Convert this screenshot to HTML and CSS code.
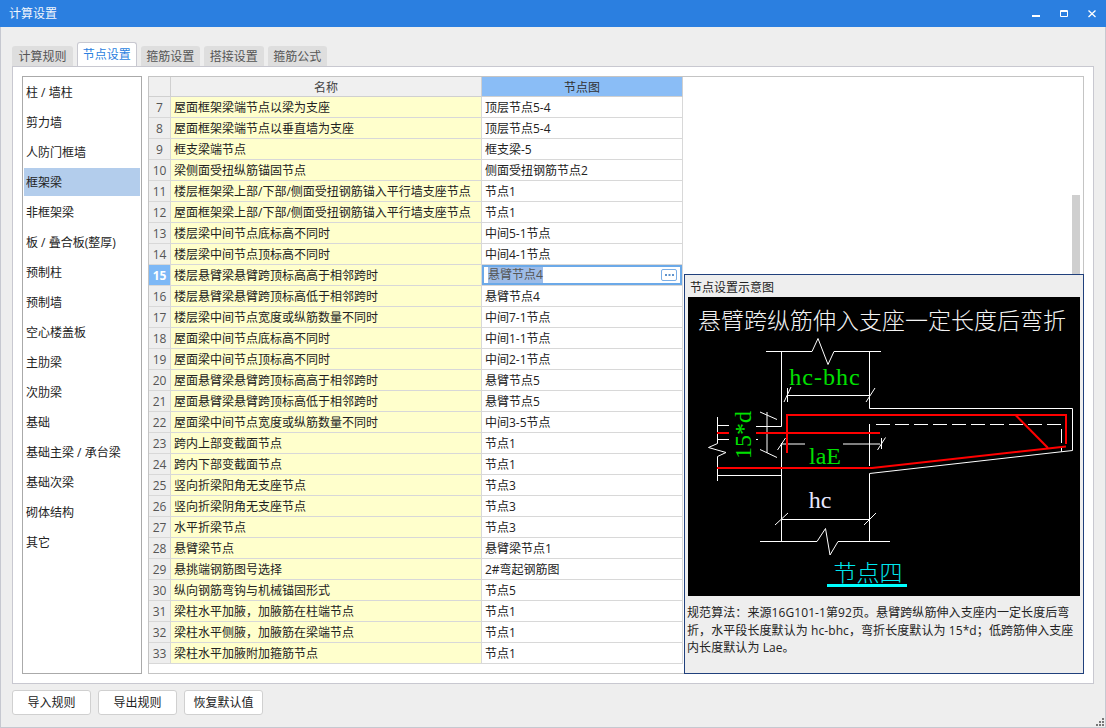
FILE: index.html
```html
<!DOCTYPE html>
<html lang="zh-CN">
<head>
<meta charset="utf-8">
<title>计算设置</title>
<link rel="stylesheet" href="styles.css">
</head>
<body>
<div class="window">
  <header class="titlebar">
    <span class="title">计算设置</span>
    <div class="controls">
      <svg class="ctl" viewBox="0 0 8 8"><rect x="0" y="5" width="8" height="2" fill="#fff"/></svg>
      <svg class="ctl" viewBox="0 0 8 8"><path d="M.5.5h7v6h-7zM.5 1.5h7" fill="none" stroke="#fff"/></svg>
      <svg class="ctl" viewBox="0 0 8 8"><path d="M.5.5l7 6.500M7.500.5l-7 6.500" fill="none" stroke="#fff" stroke-width="1.300"/></svg>
    </div>
  </header>
  <div class="content">
    <nav class="tabs">
      <span class="tab t61">计算规则</span>
      <span class="tab active">节点设置</span>
      <span class="tab">箍筋设置</span>
      <span class="tab">搭接设置</span>
      <span class="tab">箍筋公式</span>
    </nav>
    <main class="panel">
      <ul class="side">
        <li>柱 / 墙柱</li>
        <li>剪力墙</li>
        <li>人防门框墙</li>
        <li class="sel">框架梁</li>
        <li>非框架梁</li>
        <li>板 / 叠合板(整厚)</li>
        <li>预制柱</li>
        <li>预制墙</li>
        <li>空心楼盖板</li>
        <li>主肋梁</li>
        <li>次肋梁</li>
        <li>基础</li>
        <li>基础主梁 / 承台梁</li>
        <li>基础次梁</li>
        <li>砌体结构</li>
        <li>其它</li>
      </ul>
      <section class="grid">
        <table class="sheet">
          <colgroup><col class="c1"><col class="c2"><col class="c3"></colgroup>
          <thead>
            <tr><th></th><th>名称</th><th class="hsel">节点图</th></tr>
          </thead>
          <tbody>
            <tr><td class="n">7</td><td class="y">屋面框架梁端节点以梁为支座</td><td>顶层节点5-4</td></tr>
            <tr><td class="n">8</td><td class="y">屋面框架梁端节点以垂直墙为支座</td><td>顶层节点5-4</td></tr>
            <tr><td class="n">9</td><td class="y">框支梁端节点</td><td>框支梁-5</td></tr>
            <tr><td class="n">10</td><td class="y">梁侧面受扭纵筋锚固节点</td><td>侧面受扭钢筋节点2</td></tr>
            <tr><td class="n">11</td><td class="y">楼层框架梁上部/下部/侧面受扭钢筋锚入平行墙支座节点</td><td>节点1</td></tr>
            <tr><td class="n">12</td><td class="y">屋面框架梁上部/下部/侧面受扭钢筋锚入平行墙支座节点</td><td>节点1</td></tr>
            <tr><td class="n">13</td><td class="y">楼层梁中间节点底标高不同时</td><td>中间5-1节点</td></tr>
            <tr><td class="n">14</td><td class="y">楼层梁中间节点顶标高不同时</td><td>中间4-1节点</td></tr>
            <tr><td class="n cur">15</td><td class="y">楼层悬臂梁悬臂跨顶标高高于相邻跨时</td><td class="edit"><div class="editor"><span class="picked">悬臂节点4</span><span class="more"><svg class="dots" viewBox="0 0 9 2"><path d="M0 0h2v2H0zM3.500 0h2v2h-2zM7 0h2v2H7z" fill="#5f93cc"/></svg></span></div></td></tr>
            <tr><td class="n">16</td><td class="y">楼层悬臂梁悬臂跨顶标高低于相邻跨时</td><td>悬臂节点4</td></tr>
            <tr><td class="n">17</td><td class="y">楼层梁中间节点宽度或纵筋数量不同时</td><td>中间7-1节点</td></tr>
            <tr><td class="n">18</td><td class="y">屋面梁中间节点底标高不同时</td><td>中间1-1节点</td></tr>
            <tr><td class="n">19</td><td class="y">屋面梁中间节点顶标高不同时</td><td>中间2-1节点</td></tr>
            <tr><td class="n">20</td><td class="y">屋面悬臂梁悬臂跨顶标高高于相邻跨时</td><td>悬臂节点5</td></tr>
            <tr><td class="n">21</td><td class="y">屋面悬臂梁悬臂跨顶标高低于相邻跨时</td><td>悬臂节点5</td></tr>
            <tr><td class="n">22</td><td class="y">屋面梁中间节点宽度或纵筋数量不同时</td><td>中间3-5节点</td></tr>
            <tr><td class="n">23</td><td class="y">跨内上部变截面节点</td><td>节点1</td></tr>
            <tr><td class="n">24</td><td class="y">跨内下部变截面节点</td><td>节点1</td></tr>
            <tr><td class="n">25</td><td class="y">竖向折梁阳角无支座节点</td><td>节点3</td></tr>
            <tr><td class="n">26</td><td class="y">竖向折梁阴角无支座节点</td><td>节点3</td></tr>
            <tr><td class="n">27</td><td class="y">水平折梁节点</td><td>节点3</td></tr>
            <tr><td class="n">28</td><td class="y">悬臂梁节点</td><td>悬臂梁节点1</td></tr>
            <tr><td class="n">29</td><td class="y">悬挑端钢筋图号选择</td><td>2#弯起钢筋图</td></tr>
            <tr><td class="n">30</td><td class="y">纵向钢筋弯钩与机械锚固形式</td><td>节点5</td></tr>
            <tr><td class="n">31</td><td class="y">梁柱水平加腋<span class="p">，</span>加腋筋在柱端节点</td><td>节点1</td></tr>
            <tr><td class="n">32</td><td class="y">梁柱水平侧腋<span class="p">，</span>加腋筋在梁端节点</td><td>节点1</td></tr>
            <tr><td class="n">33</td><td class="y">梁柱水平加腋附加箍筋节点</td><td>节点1</td></tr>
          </tbody>
        </table>
        <div class="thumb"></div>
        <aside class="preview">
          <div class="ptitle">节点设置示意图</div>
          <svg class="drawing" viewBox="688 297 392 299">
            <rect x="688" y="297" width="392" height="299" fill="#000"/>
            <text class="dt" x="882" y="329" text-anchor="middle">悬臂跨纵筋伸入支座一定长度后弯折</text>
            <g fill="none" stroke="#fff" stroke-width="1">
              <path d="M766 351.500H812L818 338.500L828 364.500L834 351.500H881"/>
              <path d="M781.500 351.500V426.500H756"/>
              <path d="M869.500 351.500V408.500H1072.500V450.500L869.500 473.500V541"/>
              <path d="M869.500 424V466"/>
              <path d="M781.500 443V541.500"/>
              <path d="M760 541.500H817L825.500 528.500L830 555L838 541.500H890"/>
              <path d="M781.500 519.500H869.500M775 525L788 513M864 525L876 513"/>
              <path d="M787.500 395.500H869.500M784 402L791 387M866 402L875 388M787.500 388V402"/>
              <path d="M876 424.500H1061.500V451.500" stroke-dasharray="14 5"/>
              <path d="M717.500 417V443.500L708.500 447.500L726 452.500L717.500 456.500V481"/>
              <path d="M717 425.500H729M717 439.500H729M717 475.500H781M756 439.500H758"/>
              <path d="M767 412V453M760 412L777 419.500M760 449.500L777 457.500"/>
              <path d="M782 444H805M843 444H880M777.500 450L785.500 438M877.500 450L885.500 437.500M881.500 438V449"/>
            </g>
            <g fill="none" stroke="#f00" stroke-width="2">
              <path d="M787 453V415H1066V444"/>
              <path d="M1015.500 415L1048 448"/>
              <path d="M717 468H872L1048 448.500L1066 446.500"/>
              <path d="M717 433H729M756 433H880"/>
            </g>
            <text class="dg sp" x="825" y="385" text-anchor="middle">hc-bhc</text>
            <text class="dg" x="825" y="464" text-anchor="middle">laE</text>
            <text class="dg" transform="translate(751 459) rotate(-90)">15*d</text>
            <text class="dw" x="820" y="508" text-anchor="middle">hc</text>
            <text class="dc" x="868" y="581" text-anchor="middle">节点四</text>
            <rect x="827" y="584" width="80" height="3" fill="#0ff"/>
          </svg>
          <p class="desc">规范算法<span class="p">：</span>来源16G101-1第92页。悬臂跨纵筋伸入支座内一定长度后弯折<span class="p">，</span>水平段长度默认为 hc-bhc<span class="p">，</span>弯折长度默认为 15*d<span class="p">；</span>低跨筋伸入支座内长度默认为 Lae。</p>
        </aside>
      </section>
    </main>
    <footer class="actions">
      <button class="btn">导入规则</button>
      <button class="btn">导出规则</button>
      <button class="btn">恢复默认值</button>
    </footer>
    <svg class="grip" viewBox="0 0 8 8"><path d="M6 0h2v2H6zM3 3h2v2H3zM6 3h2v2H6zM0 6h2v2H0zM3 6h2v2H3zM6 6h2v2H6z" fill="#777"/></svg>
  </div>
</div>
</body>
</html>
```
FILE: styles.css
```css
* { box-sizing: border-box; }
html, body { margin: 0; padding: 0; }
body {
  width: 1106px;
  height: 728px;
  overflow: hidden;
  font-family: "Open Sans", "Noto Sans CJK SC", sans-serif;
  font-size: 12px;
  line-height: 17px;
  color: #222;
}
.p { font-family: "Noto Sans CJK TC", sans-serif; }
.window { display: flex; flex-direction: column; width: 1106px; height: 728px; }
.titlebar {
  display: flex;
  align-items: center;
  justify-content: space-between;
  flex: 0 0 27px;
  padding: 0 10px 0 9px;
  background: #2b7fe0;
  color: #f2f6fc;
}
.controls { display: flex; gap: 20px; }
.ctl { display: block; width: 8px; height: 8px; }
.content {
  position: relative;
  flex: 1;
  padding: 15px 11px 0;
  background: #eeeeee;
  border: 1px solid #c6c8d0;
  border-top: 0;
}
.tabs { display: flex; align-items: flex-end; gap: 4px; height: 24px; }
.tab {
  display: flex;
  align-items: center;
  justify-content: center;
  width: 59.500px;
  height: 20px;
  background: #dedede;
  color: #555;
  border-radius: 3px 3px 0 0;
}
.t61 { width: 61px; }
.tab.active {
  height: 24px;
  padding-bottom: 1px;
  background: #fff;
  color: #2b7fe0;
  border: 1px solid #c8c8d0;
  border-bottom: 0;
}
.panel {
  display: flex;
  gap: 6px;
  height: 618px;
  padding: 9px;
  background: #fff;
  border: 1px solid #c8c8d0;
}
.side {
  flex: 0 0 120px;
  margin: 0;
  padding: 1px;
  list-style: none;
  border: 1px solid #aaa;
}
.side li {
  display: flex;
  align-items: center;
  height: 28px;
  margin-bottom: 2px;
  padding: 0 0 0 2px;
}
.side .sel { background: #b3cdec; }
.grid {
  position: relative;
  flex: 1;
  border: 1px solid #c4c4c4;
}
.sheet {
  table-layout: fixed;
  width: 534px;
  border-collapse: separate;
  border-spacing: 0;
}
.c1 { width: 22px; }
.c2 { width: 311px; }
.c3 { width: 201px; }
.sheet th {
  height: 20px;
  padding: 1px 0 0;
  font-weight: 400;
  color: #444;
  background: #f0f0f0;
  border-right: 1px solid #d0d0d0;
  border-bottom: 1px solid #d0d0d0;
}
.sheet th.hsel { background: #8abdf6; color: #333; }
.sheet td {
  height: 21px;
  padding: 0 3px;
  white-space: nowrap;
  overflow: hidden;
  border-right: 1px solid #d8d8d8;
  border-bottom: 1px solid #d8d8d8;
}
.sheet td.n { padding: 0; text-align: center; background: #eeeeee; color: #555; }
.sheet td.cur { background: #7db8f6; color: #fff; font-weight: 700; }
.sheet td.y { background: #ffffcc; }
.sheet td.edit { padding: 0; }
.editor {
  display: flex;
  align-items: center;
  justify-content: space-between;
  height: 20px;
  padding: 0 3px 0 4px;
  border: 2px solid #6ba9e8;
}
.picked { background: #9dbce8; color: #555; line-height: 16px; }
.more {
  display: flex;
  align-items: center;
  justify-content: center;
  width: 16px;
  height: 12px;
  border: 1px solid #7aaee6;
  border-radius: 2px;
  background: #fff;
}
.dots { display: block; width: 9px; height: 2px; }
.thumb {
  position: absolute;
  left: 923px;
  top: 118px;
  width: 8px;
  height: 85px;
  background: #cfcfcf;
}
.preview {
  position: absolute;
  left: 535px;
  top: 197px;
  display: flex;
  flex-direction: column;
  width: 400px;
  height: 400px;
  padding: 0 3px;
  background: #eeeeee;
  border: 1px solid #20407c;
}
.ptitle { flex: 0 0 22px; padding: 4px 2px 0; }
.drawing { display: block; flex: 0 0 299px; width: 392px; height: 299px; }
.desc { margin: 7px -1px 0 -1px; width: 393px; letter-spacing: .08px; }
.dt { font-family: "Noto Sans CJK SC", sans-serif; font-size: 23px; font-weight: 300; fill: #f4f4f4; }
.dg { font-family: "Liberation Serif", serif; font-size: 24px; fill: #00e000; }
.sp { letter-spacing: 1px; }
.dw { font-family: "Liberation Serif", serif; font-size: 24px; fill: #e8e8ff; }
.dc { font-family: "Noto Sans CJK SC", sans-serif; font-size: 23px; font-weight: 300; fill: #00e8f0; }
.actions { display: flex; gap: 7px; margin-top: 6px; }
.btn {
  width: 79px;
  height: 25px;
  padding: 0;
  font: inherit;
  color: #222;
  background: #fff;
  border: 1px solid #d0d0d0;
  border-radius: 3px;
}
.grip { position: absolute; right: 1px; bottom: 1px; width: 8px; height: 8px; }
```
